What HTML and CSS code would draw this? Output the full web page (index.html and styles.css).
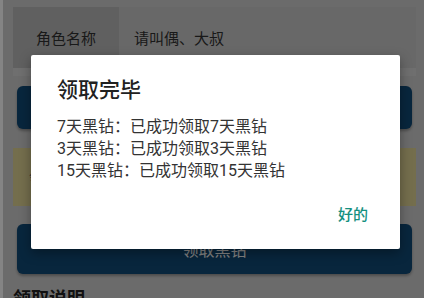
FILE: index.html
```html
<!DOCTYPE html>
<html lang="zh">
<head>
<meta charset="utf-8">
<link rel="stylesheet" href="styles.css">
</head>
<body>
<div class="page">
  <div class="row-card">
    <div class="row-label">角色名称</div>
    <div class="row-value">请叫偶、大叔</div>
  </div>
  <div class="band"></div>
  <div class="btn btn-top"></div>
  <div class="notice">领取提示</div>
  <div class="btn btn-main">领取黑钻</div>
  <h2 class="section-title">领取说明</h2>
</div>
<div class="overlay"></div>
<div class="dialog">
  <div class="dialog-title">领取完毕</div>
  <div class="dialog-body">
    <p>7天黑钻：已成功领取7天黑钻</p>
    <p>3天黑钻：已成功领取3天黑钻</p>
    <p>15天黑钻：已成功领取15天黑钻</p>
  </div>
  <div class="dialog-actions"><span class="dialog-btn">好的</span></div>
</div>
</body>
</html>
```
FILE: styles.css
```css
html, body {
  margin: 0;
  padding: 0;
  height: 298px;
  overflow: hidden;
}
body {
  background: #c4c4c4;
  font-family: Roboto, "Noto Sans CJK SC", sans-serif;
  border-left: 3px solid #f0f0f0;
  box-sizing: border-box;
}
.page {
  padding: 7px 8px 0 10px;
}
.row-card {
  display: flex;
  height: 61px;
  background: #bebebe;
}
.row-label {
  width: 106px;
  background: #b0b0b0;
  padding-left: 23px;
  box-sizing: border-box;
  display: flex;
  align-items: center;
  font-size: 15px;
  color: #2e2e2e;
}
.row-value {
  display: flex;
  align-items: center;
  padding-left: 15px;
  font-size: 15px;
  color: #2e2e2e;
}
.band {
  height: 8px;
  background: #cacaca;
}
.btn {
  margin: 0 4px 0 4px;
  background: #0f456f;
  border-radius: 6px;
  box-shadow: 0 2px 3px rgba(0,0,0,0.3);
}
.btn-top {
  margin-top: 10px;
  height: 43px;
}
.notice {
  margin-top: 19px;
  height: 58px;
  background: #d4c98c;
  color: #555;
  font-size: 13px;
  line-height: 18px;
  padding: 21px 16px;
  box-sizing: border-box;
}
.btn-main {
  margin-top: 18px;
  height: 50px;
  display: flex;
  align-items: center;
  justify-content: center;
  font-size: 16px;
  color: #f0f0f0;
}
.section-title {
  margin: 13px 0 0 0;
  font-size: 18px;
  font-weight: 700;
  color: #1f1f1f;
  line-height: 24px;
}
.overlay {
  position: absolute;
  left: 0;
  top: 0;
  width: 424px;
  height: 298px;
  background: rgba(0,0,0,0.45);
}
.dialog {
  position: absolute;
  left: 31px;
  top: 55px;
  width: 369px;
  height: 194px;
  background: #fff;
  border-radius: 2px;
  box-shadow: 0 4px 12px rgba(0,0,0,0.35);
  box-sizing: border-box;
  padding: 20px 26px 0 26px;
  display: flex;
  flex-direction: column;
}
.dialog-title {
  font-size: 21px;
  font-weight: 500;
  color: #212121;
  line-height: 30px;
}
.dialog-body {
  margin-top: 11px;
  font-size: 16px;
  color: #333;
  line-height: 22px;
}
.dialog-body p {
  margin: 0;
}
.dialog-actions {
  margin-top: auto;
  margin-bottom: 23px;
  display: flex;
  justify-content: flex-end;
  padding-right: 6px;
}
.dialog-btn {
  font-size: 15px;
  font-weight: 500;
  color: #15907f;
  line-height: 22px;
}
```
